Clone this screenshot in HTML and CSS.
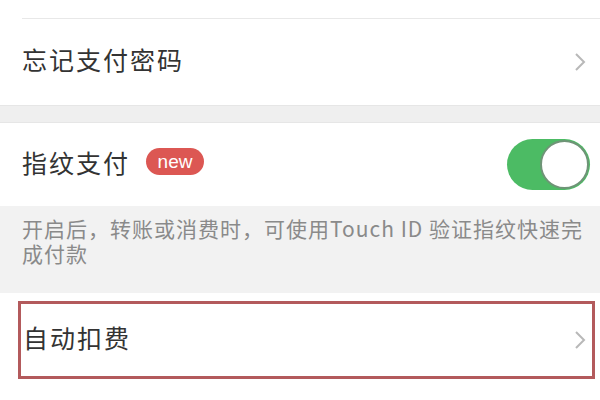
FILE: index.html
```html
<!DOCTYPE html>
<html lang="zh-CN">
<head>
    <meta charset="UTF-8">
    <meta name="viewport" content="width=device-width, initial-scale=1.0">
    <title>支付管理</title>
    <link rel="stylesheet" href="styles.css">
</head>
<body>
    <div class="top"></div>

    <div class="row">
        <span class="title">忘记支付密码</span>
        <svg class="arrow" width="12" height="20" viewBox="0 0 12 20">
            <polyline points="2,2 10,10 2,18" />
        </svg>
    </div>

    <div class="gap"></div>

    <div class="row switch-row">
        <div class="label">
            <span class="title">指纹支付</span>
            <span class="badge">new</span>
        </div>
        <div class="toggle"><div class="knob"></div></div>
    </div>

    <div class="tip">开启后，转账或消费时，可使用Touch ID 验证指纹快速完成付款</div>

    <div class="auto">
        <div class="row marked">
            <span class="title">自动扣费</span>
            <svg class="arrow" width="12" height="20" viewBox="0 0 12 20">
                <polyline points="2,2 10,10 2,18" />
            </svg>
        </div>
    </div>
</body>
</html>
```

FILE: styles.css
```css
body {
    margin: 0;
    background: white;
    font-family: "Noto Sans CJK SC", "Noto Sans", sans-serif;
    color: #333;
}
.top {
    height: 18px;
    margin-left: 22px;
    border-bottom: 1px solid #e8e8e8;
}
.row {
    height: 86px;
    display: flex;
    align-items: center;
    justify-content: space-between;
    padding: 0 14px 0 22px;
}
.title {
    font-size: 25px;
    letter-spacing: 2px;
    color: #333;
    margin-bottom: 6px;
}
.arrow polyline {
    fill: none;
    stroke: #b8b8b8;
    stroke-width: 2;
}
.gap {
    height: 16px;
    background: #efefef;
    border-top: 1px solid #e6e6e6;
    border-bottom: 1px solid #e6e6e6;
}
.switch-row {
    height: 83px;
    padding-right: 10px;
}
.label { display: flex; align-items: center; }
.badge {
    margin: 0 0 6px 16px;
    width: 58px;
    height: 27px;
    border-radius: 14px;
    background: #dc5753;
    color: white;
    font-family: "Liberation Sans", sans-serif;
    font-size: 19px;
    line-height: 27px;
    text-align: center;
}
.toggle {
    width: 83px;
    height: 51px;
    border-radius: 26px;
    background: #4cbb64;
    display: flex;
    justify-content: flex-end;
    align-items: center;
    box-sizing: border-box;
    padding-right: 1px;
}
.knob {
    width: 45px;
    height: 45px;
    border-radius: 50%;
    background: white;
    border: 2px solid #6f9477;
}
.tip {
    background: #f2f2f2;
    padding: 10px 12px 27px 22px;
    font-size: 21px;
    line-height: 25px;
    letter-spacing: 1px;
    color: #8a8a8a;
}
.auto {
    padding: 8px 5px 22px 18px;
}
.marked {
    height: 72px;
    border: 3px solid #b35a5c;
    padding: 0 6px 0 2px;
}
```
